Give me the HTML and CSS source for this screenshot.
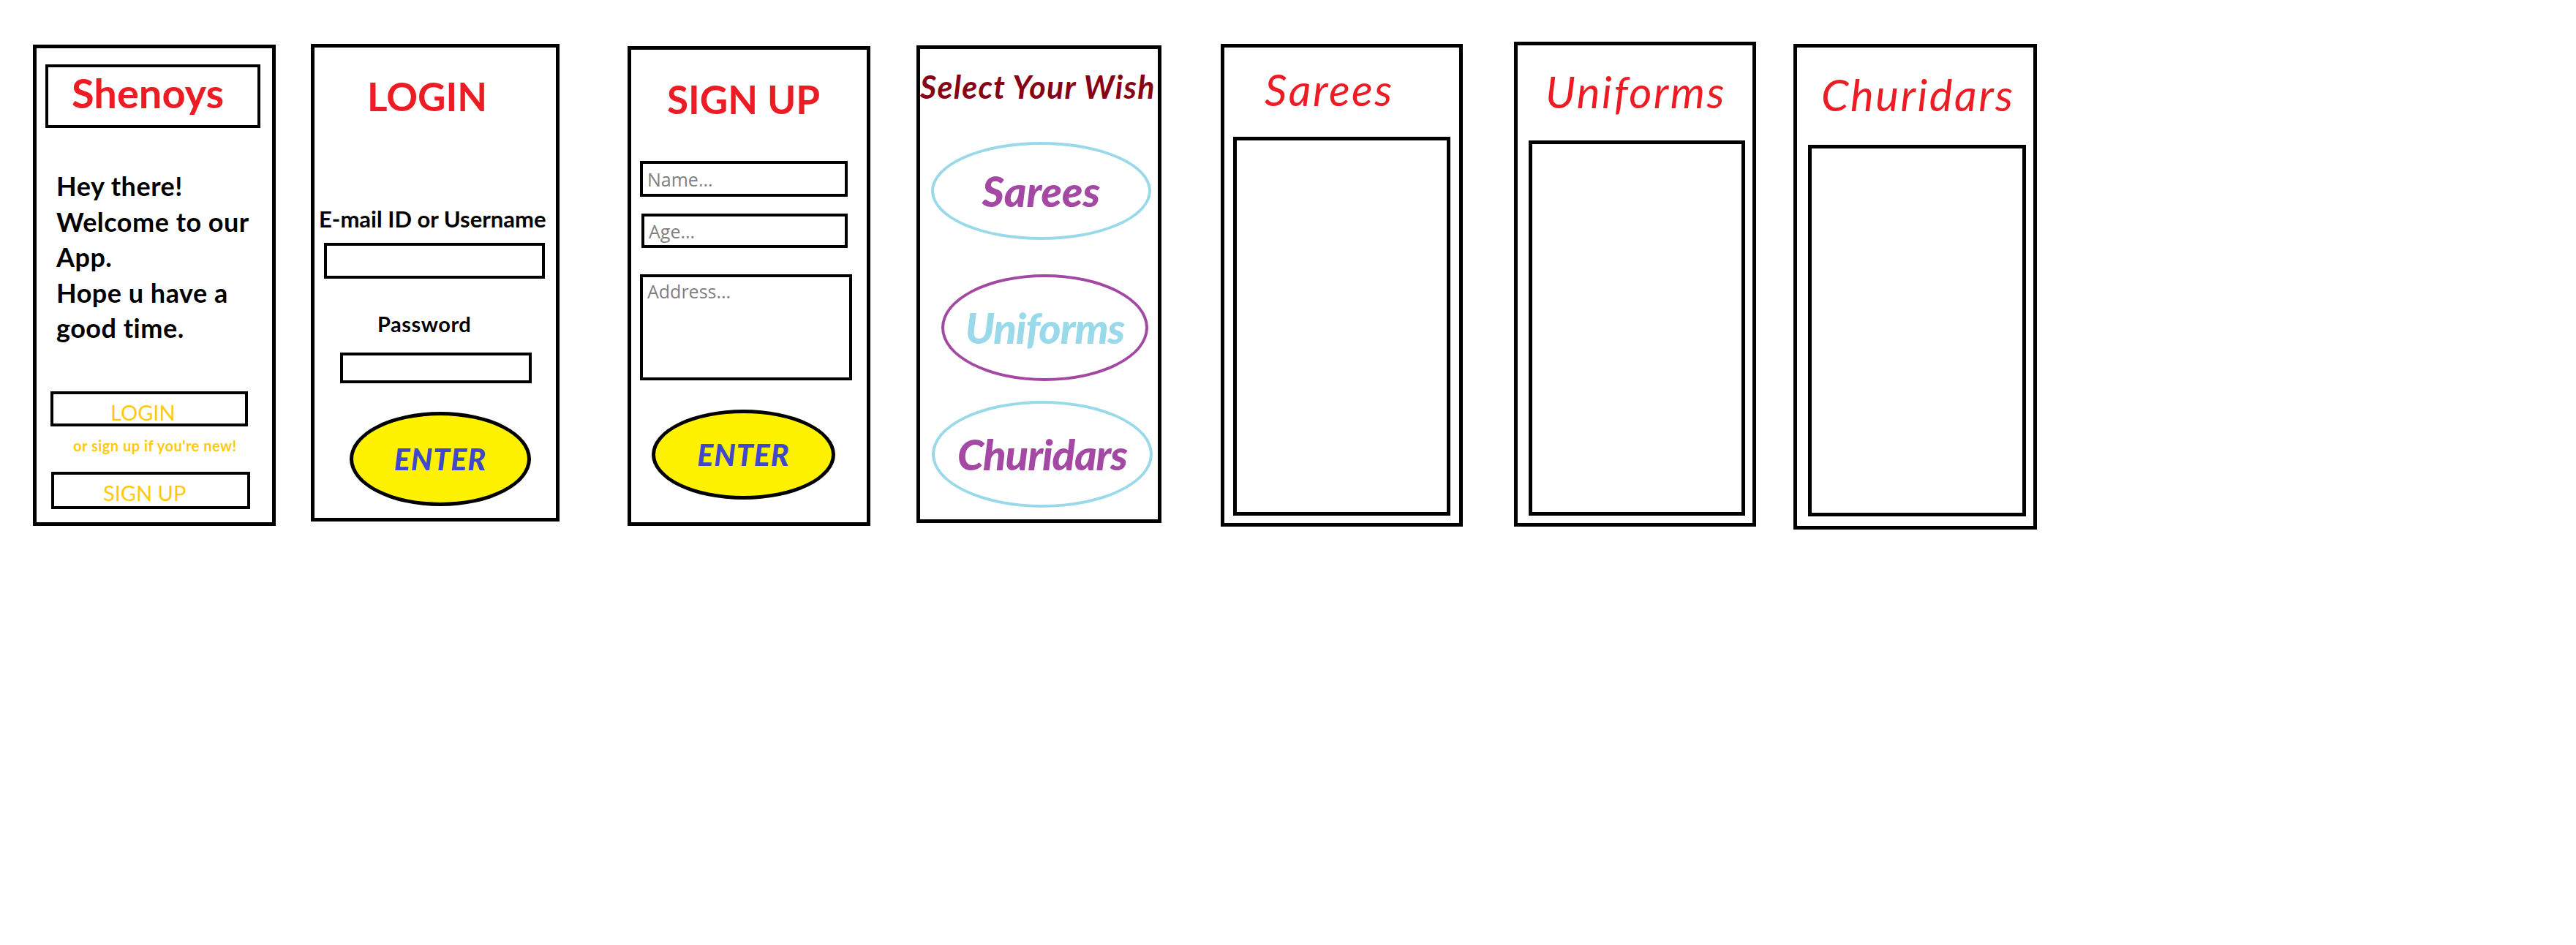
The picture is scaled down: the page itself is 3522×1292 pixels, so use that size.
FILE: index.html
```html
<!DOCTYPE html>
<html lang="en">
<head>
    <meta charset="UTF-8">
    <meta name="viewport" content="width=device-width, initial-scale=1.0">
    <title>Shenoys App Wireframe</title>
    <link rel="stylesheet" href="styles.css">
</head>
<body>
    <div class="board">

        <!-- home -->
        <div class="screen screen-home">
            <div class="brand">Shenoys</div>
            <p class="welcome">Hey there!<br>Welcome to our<br>App.<br>Hope u have a<br>good time.</p>
            <button class="box-btn btn-login">LOGIN</button>
            <p class="hint">or sign up if you're new!</p>
            <button class="box-btn btn-signup">SIGN UP</button>
        </div>

        <!-- login -->
        <div class="screen screen-login">
            <h1 class="title title-login">LOGIN</h1>
            <label class="field-label label-user">E-mail ID or Username</label>
            <input class="field field-user" type="text">
            <label class="field-label label-pass">Password</label>
            <input class="field field-pass" type="password">
            <button class="enter enter-login">ENTER</button>
        </div>

        <!-- sign up -->
        <div class="screen screen-signup">
            <h1 class="title title-signup">SIGN UP</h1>
            <input class="field field-name" type="text" placeholder="Name...">
            <input class="field field-age" type="text" placeholder="Age...">
            <textarea class="field field-address" placeholder="Address..."></textarea>
            <button class="enter enter-signup">ENTER</button>
        </div>

        <!-- categories -->
        <div class="screen screen-wish">
            <h2 class="wish-title">Select Your Wish</h2>
            <button class="wish wish-sarees">Sarees</button>
            <button class="wish wish-uniforms">Uniforms</button>
            <button class="wish wish-churidars">Churidars</button>
        </div>

        <div class="screen screen-sarees">
            <h2 class="cat-title">Sarees</h2>
            <div class="cat-list"></div>
        </div>

        <div class="screen screen-uniforms">
            <h2 class="cat-title">Uniforms</h2>
            <div class="cat-list"></div>
        </div>

        <div class="screen screen-churidars">
            <h2 class="cat-title">Churidars</h2>
            <div class="cat-list"></div>
        </div>

    </div>
</body>
</html>
```

FILE: styles.css
```css
* {
    box-sizing: border-box;
}
body {
    margin: 0;
    background: #fff;
    font-family: Lato, "Open Sans", sans-serif;
    color: #000;
}
h1, h2, p {
    margin: 0;
    font-weight: normal;
}
button {
    display: block;
    font-family: inherit;
    background: none;
    padding: 0;
    cursor: pointer;
}

.board {
    display: flex;
    align-items: flex-start;
}
.screen {
    flex: none;
    display: flex;
    flex-direction: column;
    align-items: flex-start;
    border: 5px solid #000;
    background: #fff;
}

/* screen sizes and spacing */
.screen-home      { width: 332px; height: 658px; margin: 61px 0 0 45px; }
.screen-login     { width: 340px; height: 653px; margin: 60px 0 0 48px; }
.screen-signup    { width: 332px; height: 656px; margin: 63px 0 0 93px; }
.screen-wish      { width: 335px; height: 653px; margin: 62px 0 0 63px; }
.screen-sarees    { width: 331px; height: 660px; margin: 60px 0 0 81px; }
.screen-uniforms  { width: 331px; height: 663px; margin: 57px 0 0 70px; }
.screen-churidars { width: 333px; height: 664px; margin: 60px 0 0 51px; }

/* home */
.brand {
    width: 294px;
    height: 87px;
    margin: 22px 0 0 12px;
    padding: 7px 0 0 32px;
    border: 4px solid #000;
    color: #ed1c24;
    font-size: 56px;
    font-weight: 700;
    line-height: 1;
}
.welcome {
    margin: 55px 0 0 27px;
    font-size: 36px;
    font-weight: 700;
    line-height: 48.5px;
    letter-spacing: 0.5px;
    white-space: nowrap;
}
.box-btn {
    height: 48px;
    border: 4px solid #000;
    color: #ffc90e;
    font-size: 29px;
    line-height: 1;
    text-align: left;
}
.btn-login {
    width: 270px;
    margin: 62px 0 0 19px;
    padding: 9px 0 0 78px;
}
.hint {
    margin: 16px 0 0 50px;
    color: #ffc90e;
    font-size: 20px;
    font-weight: 700;
    line-height: 1;
    letter-spacing: 0.5px;
    white-space: nowrap;
}
.btn-signup {
    width: 272px;
    height: 51px;
    margin: 26px 0 0 20px;
    padding: 6px 0 0 67px;
}

/* login + sign up */
.title {
    color: #ed1c24;
    font-size: 53px;
    font-weight: 700;
    line-height: 1;
}
.title-login  { margin: 40px 0 0 72px; }
.title-signup { margin: 41px 0 0 49px; }

.field-label {
    font-size: 31px;
    font-weight: 700;
    line-height: 1;
    white-space: nowrap;
}
.label-user { margin: 126px 0 0 6px; }
.label-pass { margin: 47px 0 0 86px; font-size: 29px; letter-spacing: 0.5px; }

.field {
    display: block;
    border: 4px solid #000;
    border-radius: 0;
    background: #fff;
    padding: 0 0 0 6px;
    font-family: "Open Sans", sans-serif;
    font-size: 25px;
    color: #000;
    outline: none;
    resize: none;
}
.field::placeholder {
    color: #7f7f7f;
    opacity: 1;
}
.field-user    { width: 302px; height: 49px; margin: 17px 0 0 13px; }
.field-pass    { width: 262px; height: 42px; margin: 25px 0 0 35px; }
.field-name    { width: 284px; height: 49px; margin: 58px 0 0 12px; }
.field-age     { width: 282px; height: 47px; margin: 23px 0 0 14px; }
.field-address { width: 290px; height: 145px; margin: 36px 0 0 12px; padding-top: 2px; }

.enter {
    display: flex;
    align-items: center;
    justify-content: center;
    border: 5px solid #000;
    border-radius: 50%;
    background: #fff200;
    color: #3f48cc;
    font-size: 41px;
    font-weight: 900;
    font-style: italic;
    line-height: 1;
    letter-spacing: 1px;
}
.enter-login  { width: 248px; height: 129px; margin: 39px 0 0 48px; }
.enter-signup { width: 251px; height: 123px; margin: 40px 0 0 28px; }

/* select your wish */
.wish-title {
    margin: 30px 0 0 0;
    color: #880015;
    font-size: 43px;
    font-weight: 700;
    font-style: italic;
    line-height: 1;
    white-space: nowrap;
    letter-spacing: 1.3px;
}
.wish {
    display: flex;
    align-items: center;
    justify-content: center;
    border: 4px solid #99d9ea;
    border-radius: 50%;
    color: #a349a4;
    font-size: 58px;
    font-weight: 900;
    font-style: italic;
    line-height: 1;
}
.wish-sarees    { width: 301px; height: 134px; margin: 54px 0 0 15px; }
.wish-uniforms  { width: 283px; height: 146px; margin: 47px 0 0 29px; border-color: #a349a4; color: #99d9ea; letter-spacing: -1px; }
.wish-churidars { width: 302px; height: 146px; margin: 27px 0 0 16px; letter-spacing: -1px; }

/* category screens */
.cat-title {
    color: #ed1c24;
    font-size: 60px;
    font-style: italic;
    line-height: 1;
    letter-spacing: 2.5px;
}
.cat-list {
    border: 5px solid #000;
}
.screen-sarees .cat-title    { margin: 27px 0 0 55px; }
.screen-sarees .cat-list     { width: 297px; height: 518px; margin: 35px 0 0 12px; }
.screen-uniforms .cat-title  { margin: 33px 0 0 38px; }
.screen-uniforms .cat-list   { width: 296px; height: 513px; margin: 37px 0 0 15px; }
.screen-churidars .cat-title { margin: 34px 0 0 33px; }
.screen-churidars .cat-list  { width: 298px; height: 508px; margin: 39px 0 0 15px; }
```
